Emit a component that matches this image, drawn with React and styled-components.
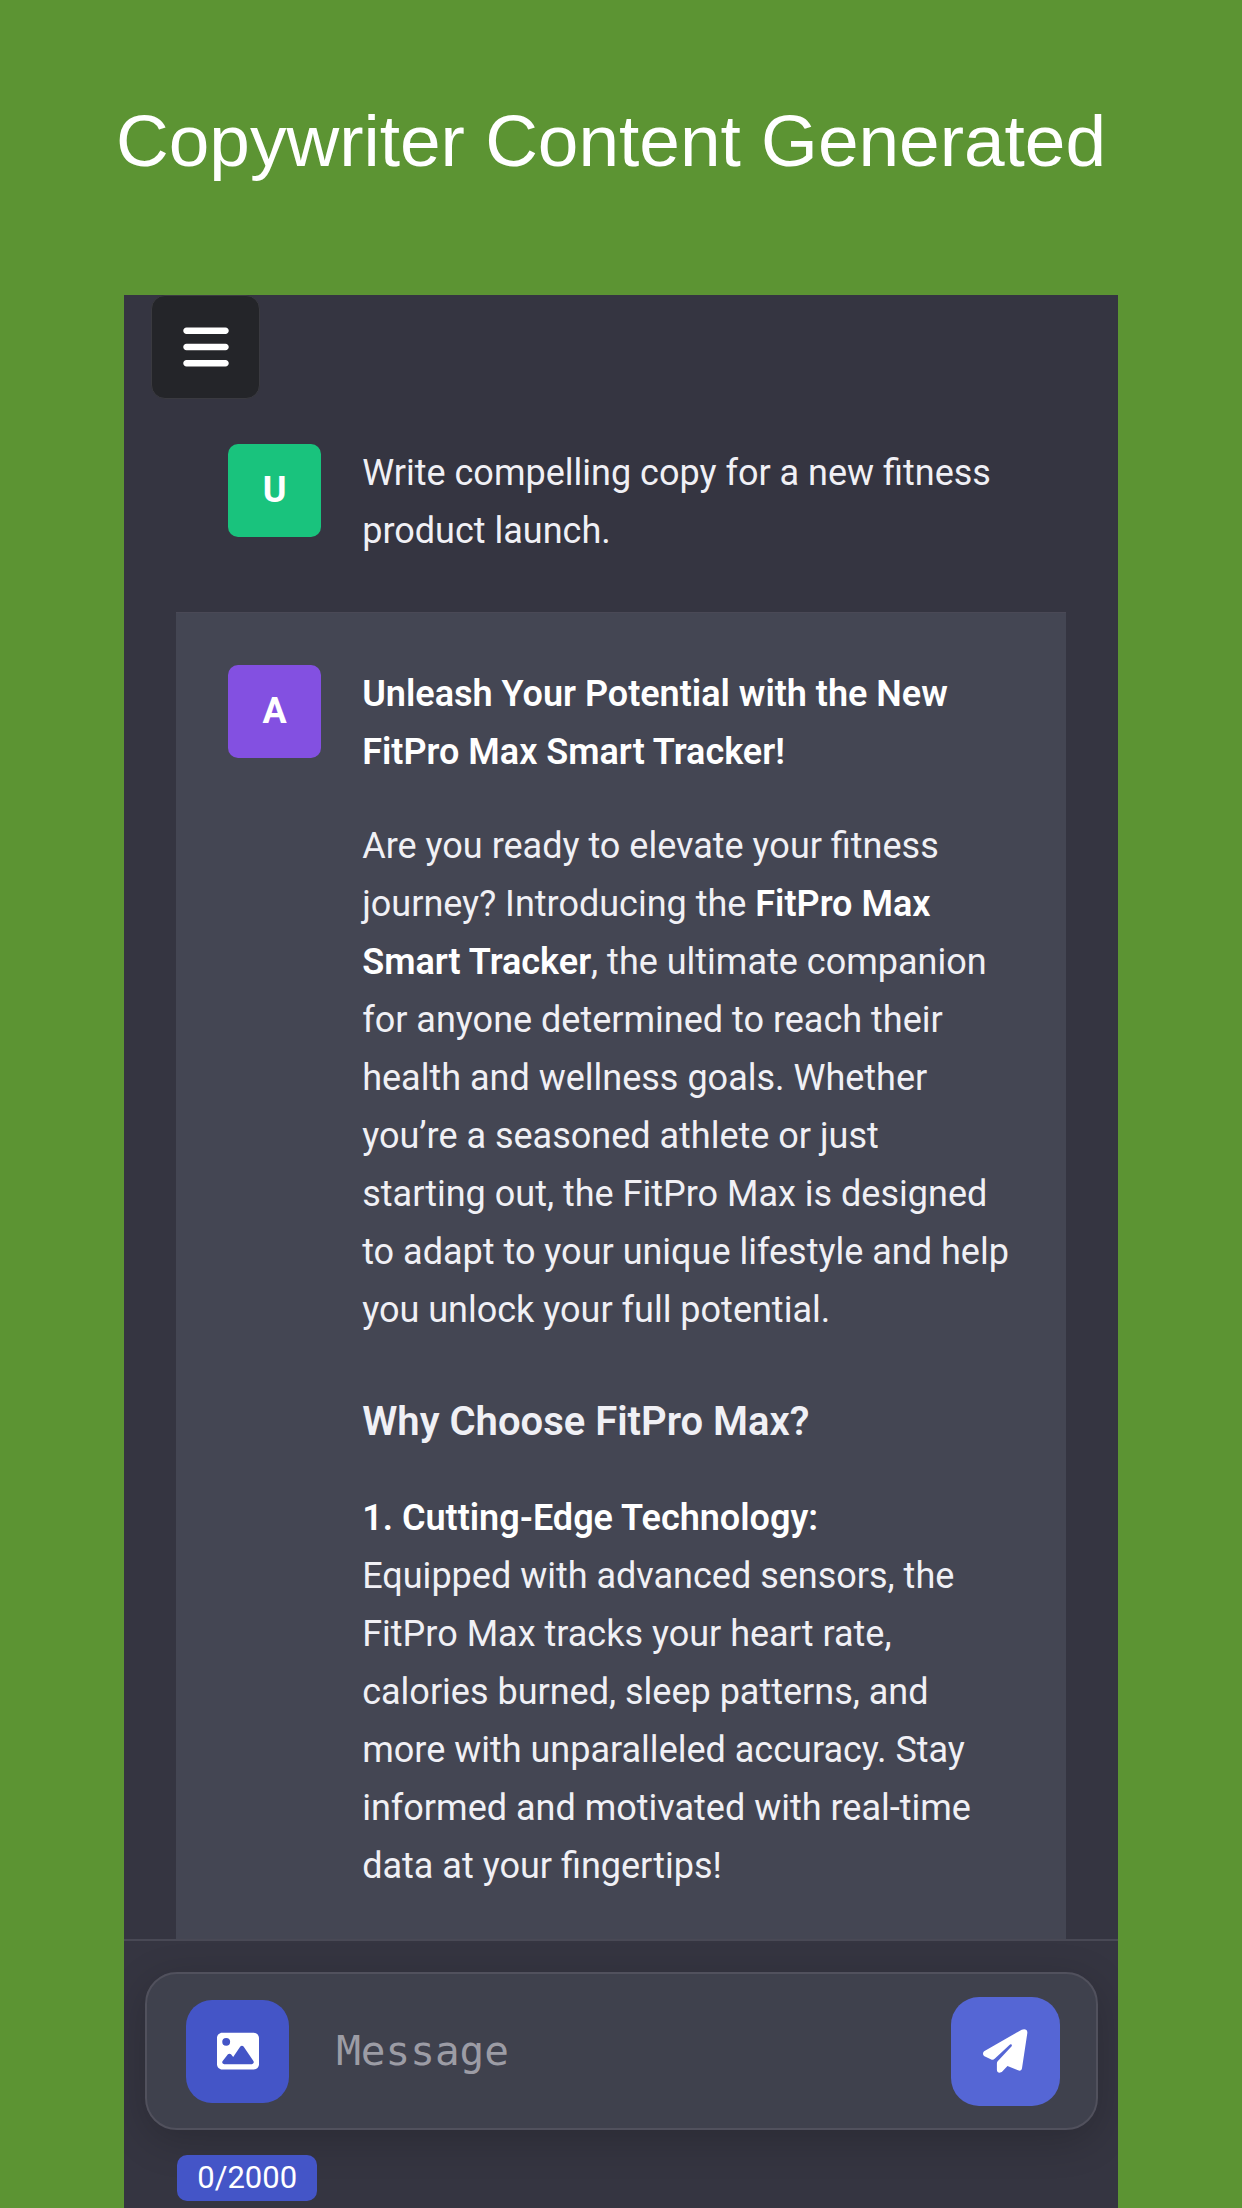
import React, { useState } from 'react'
import styled, { createGlobalStyle } from 'styled-components'
import { FaBars, FaImage } from 'react-icons/fa6'


const MAX_LENGTH = 2000

function PlaneIcon() {
    return (
        <svg width="45" height="44" viewBox="0 0 136 133" fill="currentColor" aria-hidden="true">
            <path d="M117 2C127-2 135 2 134 12L118 118C117 125 112 128 106 125L74 112L59 128C51 136 42 132 42 124V104Q42 100 45 97L86 53C90 48 84 44 80 48L36 89Q31 94 25 92L6 83C-2 79-2 70 6 66Z" />
        </svg>
    )
}

function App() {

    const [message, setMessage] = useState('')

    return (
        <Page>
            <GlobalStyle />
            <Title>Copywriter Content Generated</Title>
            <Phone>
                <MenuButton type="button" aria-label="Open menu">
                    <FaBars size={52} />
                </MenuButton>
                <Chat>
                    <Message>
                        <Avatar color="#19c37d">U</Avatar>
                        <Text>
                            <p>Write compelling copy for a new fitness product launch.</p>
                        </Text>
                    </Message>
                    <Message $assistant>
                        <Avatar color="#8350e1">A</Avatar>
                        <Text>
                            <p><strong>Unleash Your Potential with the New FitPro Max Smart Tracker!</strong></p>
                            <p>
                                Are you ready to elevate your fitness journey? Introducing
                                the <strong>FitPro Max Smart Tracker</strong>, the ultimate companion
                                for anyone determined to reach their health and wellness goals.
                                Whether you’re a seasoned athlete or just starting out, the FitPro Max
                                is designed to adapt to your unique lifestyle and help you unlock
                                your full potential.
                            </p>
                            <h3>Why Choose FitPro Max?</h3>
                            <p>
                                <strong>1. Cutting-Edge Technology:</strong><br />
                                Equipped with advanced sensors, the FitPro Max tracks your heart rate,
                                calories burned, sleep patterns, and more with unparalleled accuracy.
                                Stay informed and motivated with real-time data at your fingertips!
                            </p>
                        </Text>
                    </Message>
                </Chat>
                <Footer>
                    <Composer onSubmit={e => e.preventDefault()}>
                        <ImageButton type="button" aria-label="Add image">
                            <FaImage size={42} />
                        </ImageButton>
                        <MessageInput
                            aria-label="Message"
                            placeholder="Message"
                            maxLength={MAX_LENGTH}
                            value={message}
                            onChange={e => setMessage(e.target.value)}
                        />
                        <SendButton type="submit" aria-label="Send">
                            <PlaneIcon />
                        </SendButton>
                    </Composer>
                    <Counter>{message.length}/{MAX_LENGTH}</Counter>
                </Footer>
            </Phone>
        </Page>
    )
}

const GlobalStyle = createGlobalStyle`
  * {
    box-sizing: border-box;
  }

  body {
    margin: 0;
    background: #5c9433;
  }
`

const Page = styled.div`
  display: flex;
  flex-direction: column;
  height: 100vh;
`

const Title = styled.h1`
  margin: 0;
  padding: 99px 116px 112px;
  color: #fff;
  font: 400 73px/84px "Liberation Sans", Arial, sans-serif;
`

const Phone = styled.main`
  position: relative;
  display: flex;
  flex-direction: column;
  flex: 1;
  min-height: 0;
  margin: 0 10%;
  overflow: hidden;
  background: #353541;
  color: #f0f0f5;
  font: 400 36px/58px Roboto, sans-serif;
`

const Button = styled.button`
  display: flex;
  align-items: center;
  justify-content: center;
  flex-shrink: 0;
  padding: 0;
  border: none;
  color: #fff;
  cursor: pointer;
`

// floats over the scrolling chat
const MenuButton = styled(Button)`
  position: absolute;
  top: 0;
  left: 27px;
  width: 109px;
  height: 104px;
  border: 1px solid #3a3a40;
  border-radius: 14px;
  background: #242529;
`

const Chat = styled.section`
  flex: 1;
  min-height: 0;
  padding: 97px 52px 0;
  overflow-y: auto;
  scrollbar-width: none;
`

const Message = styled.article`
  display: flex;
  gap: 41px;
  padding: 52px 56px 52px 52px;
  ${props => props.$assistant && `
    border-top: 1px solid #4a4956;
    background: #444653;
  `}
`

const Avatar = styled.div`
  flex-shrink: 0;
  width: 93px;
  height: 93px;
  border-radius: 10px;
  background: ${props => props.color};
  color: #fff;
  font-weight: 700;
  line-height: 93px;
  text-align: center;
`

const Text = styled.div`
  flex: 1;
  min-width: 0;

  p {
    margin: 0 0 36px;
  }

  p:only-child {
    margin: 0;
  }

  h3 {
    margin: 52px 0 36px;
    font-size: 40px;
    font-weight: 600;
    line-height: 62px;
  }

  strong {
    color: #fff;
    font-weight: 600;
  }
`

const Footer = styled.footer`
  display: flex;
  flex-direction: column;
  align-items: flex-start;
  gap: 25px;
  padding: 31px 20px 7px 21px;
  border-top: 2px solid #494955;
`

const Composer = styled.form`
  display: flex;
  align-items: center;
  align-self: stretch;
  gap: 47px;
  height: 158px;
  padding: 0 36px 0 39px;
  border: 2px solid #51515d;
  border-radius: 32px;
  background: #3f414d;
  box-shadow: 0 10px 40px rgba(0, 0, 0, 0.2);
`

const ImageButton = styled(Button)`
  width: 103px;
  height: 103px;
  border-radius: 26px;
  background: #4455c7;
`

const SendButton = styled(Button)`
  width: 109px;
  height: 109px;
  border-radius: 28px;
  background: #5566d5;
`

const MessageInput = styled.input`
  flex: 1;
  min-width: 0;
  padding: 0;
  border: none;
  outline: none;
  background: transparent;
  color: #ececf1;
  font: 400 41px/58px "DejaVu Sans Mono", monospace;

  &::placeholder {
    color: #9c9ca5;
    opacity: 1;
  }
`

const Counter = styled.span`
  margin-left: 32px;
  padding: 0 20px;
  border-radius: 10px;
  background: #4455c7;
  color: #fff;
  font-size: 31px;
  line-height: 46px;
`

export default App
